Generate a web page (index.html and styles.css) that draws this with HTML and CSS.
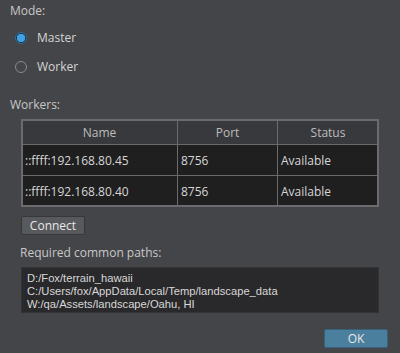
FILE: index.html
```html
<!DOCTYPE html>
<html lang="en">
<head>
    <meta charset="UTF-8">
    <title>Mode</title>
    <link rel="stylesheet" href="styles.css">
</head>
<body>
    <div class="dialog">
        <div class="label mode-label">Mode:</div>
        <label class="radio checked"><span class="dot"></span>Master</label>
        <label class="radio"><span class="dot"></span>Worker</label>

        <div class="label workers-label">Workers:</div>
        <table class="workers">
            <thead>
                <tr><th class="c-name">Name</th><th class="c-port">Port</th><th>Status</th></tr>
            </thead>
            <tbody>
                <tr><td>::ffff:192.168.80.45</td><td>8756</td><td>Available</td></tr>
                <tr><td>::ffff:192.168.80.40</td><td>8756</td><td>Available</td></tr>
            </tbody>
        </table>
        <button class="btn connect">Connect</button>

        <div class="label paths-label">Required common paths:</div>
        <div class="paths">
            <div>D:/Fox/terrain_hawaii</div>
            <div>C:/Users/fox/AppData/Local/Temp/landscape_data</div>
            <div>W:/qa/Assets/landscape/Oahu, HI</div>
        </div>

        <div class="footer">
            <button class="btn ok">OK</button>
        </div>
    </div>
</body>
</html>
```

FILE: styles.css
```css
body{
    margin: 0;
    background: #444548;
    font-family: "Open Sans", "Noto Sans", sans-serif;
    font-size: 12px;
    color: #d4d4d4;
}
.dialog{
    width: 400px;
    height: 353px;
    display: flex;
    flex-direction: column;
    box-sizing: border-box;
    padding: 2px 12px 0 21px;
}
.label{
    color: #c8c8c8;
    line-height: 17px;
}
.mode-label{
    margin-left: -11px;
}
.radio{
    display: flex;
    align-items: center;
    gap: 10px;
    height: 29px;
    margin-left: -6px;
    color: #d4d4d4;
}
.radio:first-of-type{
    margin-top: 4px;
}
.dot{
    width: 10px;
    height: 10px;
    border: 1px solid #8a8a8c;
    border-radius: 50%;
    box-sizing: content-box;
}
.radio.checked .dot{
    border-color: #2d6f9c;
    background: radial-gradient(circle, #3ea1e6 0 4px, #2b2c30 4.5px 5px);
}
.workers-label{
    margin-top: 15px;
    margin-left: -11px;
}
.workers{
    margin-top: 6px;
    width: 358px;
    border-collapse: collapse;
    border: 1px solid #1d1d1f;
    outline: 1px solid #6b6b6d;
    outline-offset: -2px;
}
.workers th, .workers td{
    border: 1px solid #6b6b6d;
    padding: 0 3px;
    text-align: left;
    font-weight: normal;
}
.workers th{
    height: 24px;
    background: #38393c;
    color: #bdbdbd;
    text-align: center;
}
.workers td{
    height: 30px;
    background: #1f1f20;
    color: #d6d6d6;
}
.c-name{
    width: 149px;
}
.c-port{
    width: 93px;
}
.btn{
    font-family: inherit;
    font-size: 12px;
    color: #e8e8e8;
    border-radius: 2px;
    cursor: pointer;
}
.connect{
    align-self: flex-start;
    margin-top: 9px;
    width: 64px;
    height: 19px;
    padding: 0;
    background: #58595c;
    border: 1px solid #36373a;
}
.paths-label{
    margin-top: 9px;
    margin-left: -1px;
}
.paths{
    margin-top: 6px;
    width: 358px;
    height: 46px;
    box-sizing: border-box;
    padding: 4px 5px;
    background: #29292b;
    border: 1px solid #333336;
    font-family: "Liberation Sans", Arial, sans-serif;
    font-size: 11.2px;
    line-height: 13px;
    color: #d8d8d8;
}
.footer{
    display: flex;
    justify-content: flex-end;
    margin-top: 16px;
}
.ok{
    width: 64px;
    height: 19px;
    padding: 0;
    background: #4a7f9d;
    border: 1px solid #37627b;
}
```
